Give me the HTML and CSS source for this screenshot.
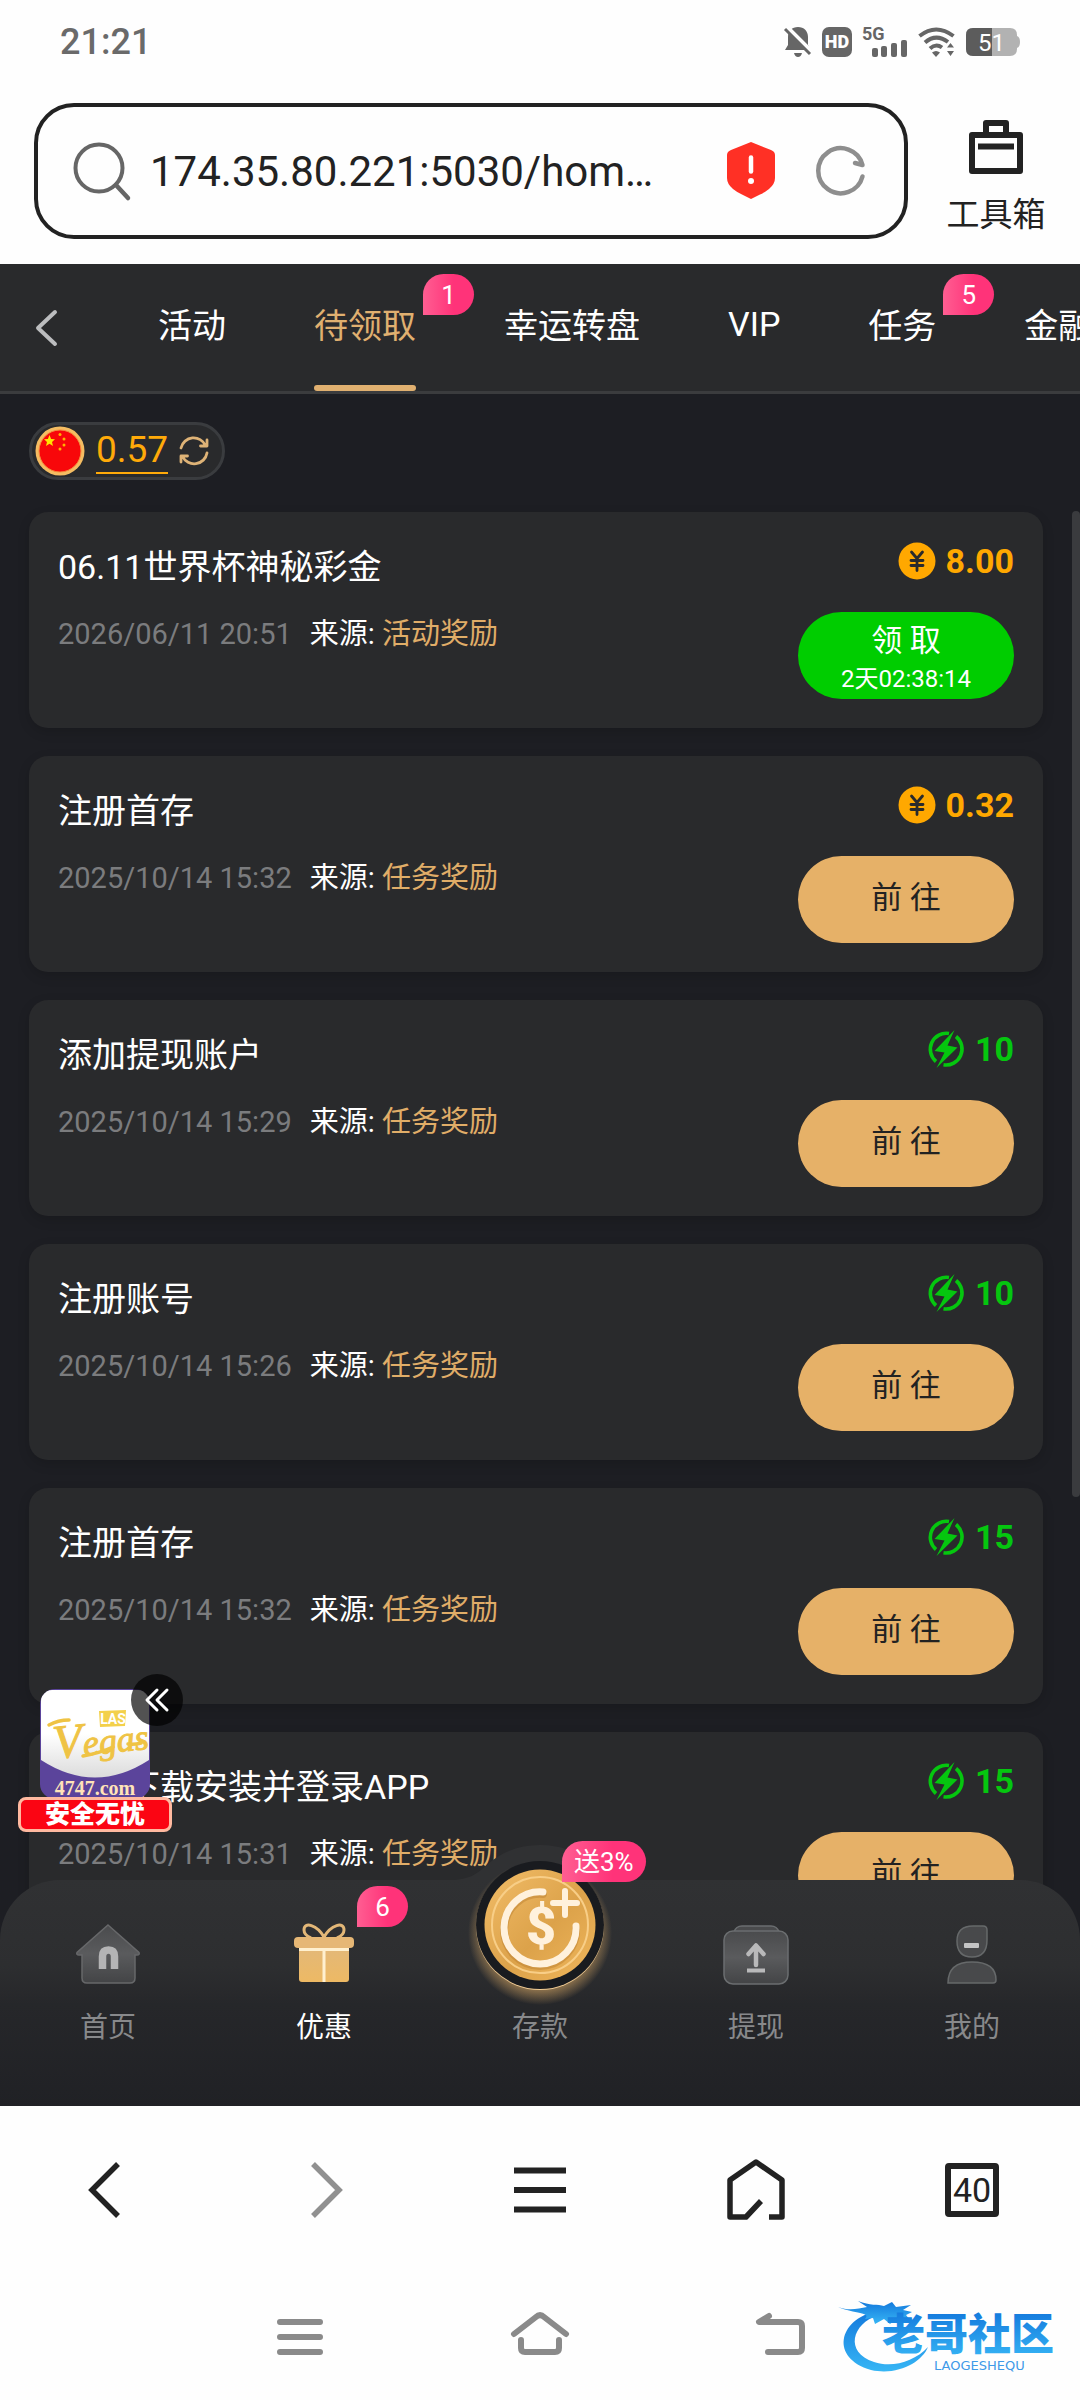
FILE: index.html
```html
<!DOCTYPE html>
<html lang="zh-CN">
<head>
<meta charset="utf-8">
<meta name="viewport" content="width=device-width, initial-scale=1">
<title>待领取</title>
<link rel="stylesheet" href="styles.css">
</head>
<body>
<svg class="defs" width="0" height="0" aria-hidden="true">
  <defs>
    <linearGradient id="grey" x1="0" y1="0" x2="0" y2="1">
      <stop offset="0" stop-color="#4a4b4d"/><stop offset=".5" stop-color="#5a5b5d"/><stop offset="1" stop-color="#434446"/>
    </linearGradient>
    <linearGradient id="gift" x1="0" y1="0" x2="0" y2="1">
      <stop offset="0" stop-color="#e3b878"/><stop offset="1" stop-color="#edb964"/>
    </linearGradient>
    <linearGradient id="coin" x1="0" y1="0" x2="1" y2="1">
      <stop offset="0" stop-color="#f2bd68"/><stop offset=".55" stop-color="#dca24a"/><stop offset="1" stop-color="#f0b75c"/>
    </linearGradient>
    <radialGradient id="glow">
      <stop offset=".76" stop-color="#e3b068" stop-opacity=".6"/><stop offset="1" stop-color="#e3b068" stop-opacity="0"/>
    </radialGradient>
    <linearGradient id="blue" x1="0" y1="0" x2="0" y2="1">
      <stop offset="0" stop-color="#1378dc"/><stop offset="1" stop-color="#37b6f5"/>
    </linearGradient>
    <linearGradient id="shade" x1="0" y1="0" x2="0" y2="1">
      <stop offset=".5" stop-color="#ffffff"/><stop offset="1" stop-color="#dcdcdc"/>
    </linearGradient>
    <symbol id="yuan" viewBox="0 0 38 38">
      <circle cx="19" cy="19" r="18.5" fill="#ffa800"/>
      <path d="M13.500 10 19 16.500 24.500 10M19 16.500V28.500M13 18.500H25M13 23.500H25" fill="none" stroke="#292a2c" stroke-width="2.800" stroke-linecap="round"/>
    </symbol>
    <symbol id="bolt" viewBox="0 0 38 38">
      <path d="M22 3.500A16 16 0 0 0 9 31.500M29 6.500A16 16 0 0 1 16.500 34.800" fill="none" stroke="#05c60f" stroke-width="3.600"/>
      <path d="M27.500 0 7.500 21 17.500 22.500 9.500 38 30.500 17.500 20.500 15.500Z" fill="#05c60f"/>
    </symbol>
  </defs>
</svg>

<div class="status">
  <time class="clock">21:21</time>
  <div class="status-icons">
    <svg width="28" height="32" viewBox="0 0 28 32"><path d="M14 1c6 0 10 4 10 10v8l3 5H1l3-5v-8C4 5 8 1 14 1Z" fill="#666"/><path d="M10 27h8q-1 4-4 4t-4-4Z" fill="#666"/><path d="M3 1 29 27" stroke="#fefefe" stroke-width="4"/><path d="M1 3 26 28" stroke="#666" stroke-width="3"/></svg>
    <svg width="30" height="30" viewBox="0 0 30 30"><rect width="30" height="30" rx="7" fill="#666"/><text x="15" y="21" class="t-hd">HD</text></svg>
    <svg width="46" height="40" viewBox="0 0 46 40"><text x="0" y="18" class="t-5g">5G</text><g fill="#666"><rect x="10" y="26" width="6" height="9" rx="2"/><rect x="19" y="24" width="6" height="11" rx="2"/><rect x="29" y="21" width="6" height="14" rx="2"/><rect x="39" y="18" width="6" height="17" rx="2"/></g></svg>
    <svg width="38" height="32" viewBox="0 0 38 32"><g fill="none" stroke="#666" stroke-width="4"><path d="M1.500 10Q18 -3 35.500 10"/><path d="M7 16.500Q18 7 30 16"/><path d="M12 22.500Q18 17 24 21.500"/></g><path d="M14 26.500Q18 23.500 22 26.500L18 31Z" fill="#666"/><path d="M29 21.500 32.500 17 36 21.500ZM29 25 32.500 30 36 25Z" fill="#666"/></svg>
    <svg width="54" height="28" viewBox="0 0 54 28"><path d="M7 0H44Q51 0 51 7V8Q54 9 54 14T51 20V21Q51 28 44 28H7Q0 28 0 21V7Q0 0 7 0Z" fill="#b2b2b2"/><path d="M26 0V28H7Q0 28 0 21V7Q0 0 7 0Z" fill="#5c5c5c"/><text x="25.500" y="23" class="t-bat">51</text></svg>
  </div>
</div>

<header class="address">
  <form class="url-box">
    <svg width="60" height="60" viewBox="0 0 60 60" fill="none" stroke="#666" stroke-width="4"><circle cx="27" cy="27" r="23.500"/><path d="M44 44 56 57" stroke-linecap="round" stroke-width="4.500"/></svg>
    <input class="url" type="text" aria-label="网址" value="174.35.80.221:5030/hom…" readonly>
    <button class="plain" type="button" aria-label="风险提示"><svg width="50" height="58" viewBox="0 0 50 58"><path d="M25 0 45 8Q49 9.500 49 13V36Q49 42 43 47Q38 51 34 52.500L25 57 16 52.500Q12 51 7 47Q1 42 1 36V13Q1 9.500 5 8Z" fill="#ff3025"/><path d="M25 15.500V29.500" stroke="#fff" stroke-width="4.500" stroke-linecap="round"/><circle cx="25" cy="39" r="3" fill="#fff"/></svg></button>
    <button class="plain reload" type="button" aria-label="刷新"><svg width="50" height="50" viewBox="0 0 50 50" fill="none" stroke="#8e8e8e" stroke-width="4.500" stroke-linecap="round" stroke-linejoin="round"><path d="M46.500 30.500A22.500 22.500 0 1 1 46.500 19L39 17"/></svg></button>
  </form>
  <button class="plain toolbox" type="button">
    <svg width="56" height="56" viewBox="0 0 56 56" fill="none" stroke="#222" stroke-width="6" stroke-linejoin="round"><rect x="4" y="16" width="48" height="36"/><path d="M18 15V4H38V15M10 27.500H46"/></svg>
    <span>工具箱</span>
  </button>
</header>

<section class="app">
  <nav class="tabs" aria-label="分类">
    <button class="plain back" type="button" aria-label="返回"><svg width="24" height="38" viewBox="0 0 24 38" fill="none" stroke="#bcbdbf" stroke-width="4" stroke-linecap="round" stroke-linejoin="round"><path d="M20 3 3 19 20 35"/></svg></button>
    <a class="tab" href="#">活动</a>
    <a class="tab active" href="#" aria-current="page">待领取<span class="badge tab-badge">1</span></a>
    <a class="tab" href="#">幸运转盘</a>
    <a class="tab" href="#">VIP</a>
    <a class="tab" href="#">任务<span class="badge tab-badge">5</span></a>
    <a class="tab" href="#">金融</a>
  </nav>

  <main class="content">
    <div class="balance">
      <svg width="50" height="50" viewBox="0 0 50 50"><circle cx="25" cy="25" r="24.500" fill="#f5bd62"/><circle cx="25" cy="25" r="21" fill="#f8070a" stroke="#f58a3c" stroke-width="1"/><path d="M14.500 9 16.100 13 20 13.200 17 16 18 20 14.500 17.700 11 20 12 16 9 13.200 12.900 13Z" fill="#ffe400"/><g fill="#ffb400"><circle cx="25" cy="8.500" r="1.500"/><circle cx="29" cy="13" r="1.500"/><circle cx="29" cy="19" r="1.500"/><circle cx="25" cy="23" r="1.500"/></g></svg>
      <a class="sum" href="#">0.57</a>
      <button class="plain" type="button" aria-label="刷新余额"><svg width="30" height="30" viewBox="0 0 30 30" fill="none" stroke="#deb377" stroke-width="2.800" stroke-linecap="round" stroke-linejoin="round"><path d="M2 12A13 13 0 0 1 26.500 9.500M28 4V10H21.500M28 17A13 13 0 0 1 3.500 20.500M2 26V20H8.500"/></svg></button>
    </div>

    <ul class="list">
      <li class="card">
        <div class="info"><h2>06.11世界杯神秘彩金</h2><p class="meta"><time>2026/06/11 20:51</time><span>来源: <em>活动奖励</em></span></p></div>
        <div class="side"><p class="amount cash"><svg width="38" height="38"><use href="#yuan"/></svg>8.00</p><button class="go claim" type="button">领 取<small>2天02:38:14</small></button></div>
      </li>
      <li class="card">
        <div class="info"><h2>注册首存</h2><p class="meta"><time>2025/10/14 15:32</time><span>来源: <em>任务奖励</em></span></p></div>
        <div class="side"><p class="amount cash"><svg width="38" height="38"><use href="#yuan"/></svg>0.32</p><button class="go" type="button">前 往</button></div>
      </li>
      <li class="card">
        <div class="info"><h2>添加提现账户</h2><p class="meta"><time>2025/10/14 15:29</time><span>来源: <em>任务奖励</em></span></p></div>
        <div class="side"><p class="amount"><svg width="38" height="38"><use href="#bolt"/></svg>10</p><button class="go" type="button">前 往</button></div>
      </li>
      <li class="card">
        <div class="info"><h2>注册账号</h2><p class="meta"><time>2025/10/14 15:26</time><span>来源: <em>任务奖励</em></span></p></div>
        <div class="side"><p class="amount"><svg width="38" height="38"><use href="#bolt"/></svg>10</p><button class="go" type="button">前 往</button></div>
      </li>
      <li class="card">
        <div class="info"><h2>注册首存</h2><p class="meta"><time>2025/10/14 15:32</time><span>来源: <em>任务奖励</em></span></p></div>
        <div class="side"><p class="amount"><svg width="38" height="38"><use href="#bolt"/></svg>15</p><button class="go" type="button">前 往</button></div>
      </li>
      <li class="card">
        <div class="info"><h2>首次下载安装并登录APP</h2><p class="meta"><time>2025/10/14 15:31</time><span>来源: <em>任务奖励</em></span></p></div>
        <div class="side"><p class="amount"><svg width="38" height="38"><use href="#bolt"/></svg>15</p><button class="go" type="button">前 往</button></div>
      </li>
    </ul>
    <div class="scrollbar"></div>
  </main>

  <aside class="promo">
    <svg class="promo-logo" width="110" height="110" viewBox="0 0 110 110">
      <clipPath id="tile"><rect width="110" height="110" rx="15"/></clipPath>
      <g clip-path="url(#tile)"><rect width="110" height="110" fill="#5b449b"/><path d="M1 12Q1 1 12 1H98Q109 1 109 12V71Q55 106 1 71Z" fill="url(#shade)"/></g>
      <path d="M59 22 86 21 85 37 60 38Z" fill="#f3d04a"/>
      <text x="73" y="35" class="t-las">LAS</text>
      <g transform="rotate(-6 50 60)"><text x="14" y="66" class="t-vegas"><tspan class="t-vegas-cap">V</tspan>egas</text></g>
      <path d="M9 36Q18 31 29 31M43 67Q60 64 73 58M88 55Q94 56 101 54" fill="none" stroke="#efc344" stroke-width="3.500" stroke-linecap="round"/>
      <text x="55" y="106" class="t-site">4747.com</text>
    </svg>
    <strong class="promo-tag">安全无忧</strong>
    <button class="plain promo-fold" type="button" aria-label="收起"><svg width="26" height="26" viewBox="0 0 26 26" fill="none" stroke="#fff" stroke-width="3" stroke-linecap="round" stroke-linejoin="round"><path d="M13 3 3 13 13 23M23 3 13 13 23 23"/></svg></button>
  </aside>

  <nav class="dock" aria-label="主导航">
    <svg class="hump" width="180" height="35" viewBox="0 0 180 35"><path d="M0 35C20 35 28 28 38 19C53 6 70 0 90 0C110 0 127 6 142 19C152 28 160 35 180 35Z" fill="#303133"/></svg>
    <a class="dock-item" href="#">
      <span class="dock-icon"><svg width="66" height="66" viewBox="0 0 66 66"><path d="M33 4 64 31.500Q65 34 62 34H60V57Q60 62 55 62H12Q7 62 7 57V34H4Q1 34 2 31.500Z" fill="url(#grey)" stroke="#67686a" stroke-width="1.500"/><path d="M27.500 48V35.500Q27.500 29 33.500 29T39.500 35.500V48" fill="none" stroke="#b4b4b5" stroke-width="7.500"/></svg></span>
      <span>首页</span>
    </a>
    <a class="dock-item active" href="#" aria-current="page">
      <span class="dock-icon"><svg width="66" height="66" viewBox="0 0 66 66"><path d="M33 16C26 4 13 0 13 9Q13 14 20 17M33 16C40 4 53 0 53 9Q53 14 46 17" fill="none" stroke="#e3b777" stroke-width="3"/><path d="M8 27H58V58Q58 61 55 61H11Q8 61 8 58Z" fill="url(#gift)"/><path d="M8 28.500H58M33 28V61" stroke="#fff0cf" stroke-width="3"/><rect x="3" y="16" width="60" height="11" rx="4" fill="#e6b775"/></svg><span class="badge dock-badge">6</span></span>
      <span>优惠</span>
    </a>
    <a class="dock-item deposit" href="#">
      <span class="dock-icon"><svg class="coin" width="160" height="160" viewBox="0 0 160 160">
        <circle cx="80" cy="88" r="72" fill="url(#glow)"/>
        <path d="M0 0H160V84H144A64 64 0 0 0 16 84H0Z" fill="none"/>
        <circle cx="80" cy="81" r="64" fill="#f0cb94"/>
        <circle cx="80" cy="80" r="64" fill="#191b1f"/>
        <circle cx="80" cy="80" r="55.500" fill="url(#coin)"/>
        <circle cx="80" cy="80" r="48" fill="none" stroke="#f8ce87" stroke-width="2"/>
        <path d="M83 49A36 36 0 1 0 116 83" fill="none" stroke="#b3782a" stroke-opacity=".4" stroke-width="8" stroke-linecap="round"/>
        <path d="M83 47A36 36 0 1 0 116 81" fill="none" stroke="#fff1dc" stroke-width="7" stroke-linecap="round"/>
        <path d="M105 46V70M93 58H117" stroke="#fff1dc" stroke-width="6" stroke-linecap="round"/>
        <text x="81" y="99" class="t-coin">$</text></svg><span class="badge offer-badge">送3%</span></span>
      <span>存款</span>
    </a>
    <a class="dock-item" href="#">
      <span class="dock-icon"><svg width="66" height="66" viewBox="0 0 66 66" stroke="#6b6e70" stroke-width="1.500"><path d="M11 11Q13 5 19 5H48Q54 5 56 11Z" fill="#4a4b4d"/><rect x="1" y="10" width="64" height="53" rx="9" fill="url(#grey)"/><path d="M33 44V26M25.500 33 33 24.500 40.500 33" fill="none" stroke="#b9b9ba" stroke-width="4.500" stroke-linecap="round" stroke-linejoin="round"/><path d="M24 49.500H42" stroke="#b9b9ba" stroke-width="4"/></svg></span>
      <span>提现</span>
    </a>
    <a class="dock-item" href="#">
      <span class="dock-icon"><svg width="66" height="66" viewBox="0 0 66 66" fill="#48494b" stroke="#66696a" stroke-width="1.500"><path d="M34 5H44Q48 5 48 9V19Q48 36 33 36Q18 36 18 20Q18 5 34 5Z"/><path d="M9 62Q9 41 33 41T57 59Q57 62 54 62Z"/><rect x="25" y="22" width="15" height="5" rx="1" fill="#c4c4c5" stroke="none"/></svg></span>
      <span>我的</span>
    </a>
  </nav>
</section>

<nav class="browser-bar" aria-label="浏览器">
  <button class="plain" type="button" aria-label="后退"><svg width="60" height="60" viewBox="0 0 60 60" fill="none" stroke="#222" stroke-width="5.500"><path d="M40 4 14 30 40 56" /></svg></button>
  <button class="plain" type="button" aria-label="前进"><svg width="60" height="60" viewBox="0 0 60 60" fill="none" stroke="#909090" stroke-width="5.500"><path d="M19 4 45 30 19 56"/></svg></button>
  <button class="plain" type="button" aria-label="菜单"><svg width="60" height="60" viewBox="0 0 60 60" stroke="#222" stroke-width="6"><path d="M4 10.500H56M4 30H56M4 49.500H56"/></svg></button>
  <button class="plain" type="button" aria-label="主页"><svg width="60" height="64" viewBox="0 0 60 64" fill="none" stroke="#222" stroke-width="5.500" stroke-linejoin="round"><path d="M35 43 20 59H4V22L30 4 56 22V59H43"/></svg></button>
  <button class="plain" type="button" aria-label="标签页"><span class="tab-count">40</span></button>
</nav>

<nav class="system-bar" aria-label="系统">
  <button class="plain" type="button" aria-label="最近任务"><svg width="60" height="48" viewBox="0 0 60 48" stroke="#8a8a8a" stroke-width="6" stroke-linecap="round"><path d="M10 9H50M10 24H50M10 39H50"/></svg></button>
  <button class="plain" type="button" aria-label="桌面"><svg width="60" height="48" viewBox="0 0 60 48" fill="none" stroke="#8a8a8a" stroke-width="6" stroke-linecap="round" stroke-linejoin="round"><path d="M4 21 26 4Q30 0 34 4L56 21M11 27V35Q11 39 15 39H45Q49 39 49 35V27"/></svg></button>
  <button class="plain" type="button" aria-label="返回上级"><svg width="60" height="48" viewBox="0 0 60 48" fill="none" stroke="#8a8a8a" stroke-width="6" stroke-linecap="round" stroke-linejoin="round"><path d="M19 3 9 9H48Q52 9 52 13V35Q52 39 48 39H18"/></svg></button>
  <div class="watermark">
    <svg width="232" height="80" viewBox="0 0 232 80">
      <path d="M36 15C-2 24 -10 62 31 74C58 80 82 66 88 51C74 66 52 72 34 66C4 56 12 28 38 19Z" fill="url(#blue)"/>
      <path d="M-2 11C8 15 18 13 27 11L18 5C30 10 38 8 44 10L52 6 56 11 71 9 63 14 72 16 66 19 70 24 58 22 50 28 44 23 35 28 33 22 25 23C32 16 14 18 -2 11Z" fill="url(#blue)"/>
      <text x="42" y="54" class="t-mark">老哥社区</text>
      <text x="94" y="74" class="t-mark-sub">LAOGESHEQU</text>
    </svg>
  </div>
</nav>
</body>
</html>
```
FILE: styles.css
```css
* {
  box-sizing: border-box;
}

body {
  margin: 0;
  height: 100vh;
  display: flex;
  flex-direction: column;
  background: #fefefe;
  color: #222;
  font-family: Roboto, "Noto Sans CJK SC", sans-serif;
}

h2,
p,
ul {
  margin: 0;
  padding: 0;
  font-weight: 400;
}

ul {
  list-style: none;
}

em {
  font-style: normal;
}

a {
  color: inherit;
  text-decoration: none;
}

svg {
  display: block;
  flex: none;
  overflow: visible;
}

.defs {
  position: absolute;
}

.plain {
  padding: 0;
  border: 0;
  background: none;
  color: inherit;
  font: inherit;
}

/* Phone status bar */

.status {
  display: flex;
  justify-content: space-between;
  align-items: center;
  height: 84px;
  padding: 0 60px;
  flex: none;
}

.clock {
  font-size: 36px;
  font-weight: 500;
  color: #6a6a6a;
}

.status-icons {
  display: flex;
  align-items: center;
  gap: 10px;
}

.t-hd,
.t-5g,
.t-bat,
.t-las,
.t-site,
.t-coin {
  text-anchor: middle;
}

.t-hd {
  font-size: 18px;
  font-weight: 900;
  fill: #fff;
}

.t-5g {
  font-size: 18px;
  font-weight: 700;
  fill: #666;
  text-anchor: start;
}

.t-bat {
  font-size: 24px;
  fill: #fff;
}

/* Address bar */

.address {
  display: flex;
  align-items: flex-start;
  gap: 36px;
  padding: 19px 32px 25px 34px;
  flex: none;
}

.url-box {
  display: flex;
  align-items: center;
  flex: 1;
  min-width: 0;
  height: 136px;
  padding: 0 38px 0 34px;
  border: 4px solid #222;
  border-radius: 40px;
}

.url {
  flex: 1;
  min-width: 0;
  height: 60px;
  margin-left: 18px;
  padding: 0;
  border: 0;
  outline: 0;
  background: none;
  color: #222;
  font: inherit;
  font-size: 42px;
}

.reload {
  margin-left: 40px;
}

.toolbox {
  display: flex;
  flex-direction: column;
  align-items: center;
  gap: 20px;
  width: 104px;
  padding-top: 16px;
  font-size: 33px;
  line-height: 40px;
  white-space: nowrap;
}

/* Web app */

.app {
  position: relative;
  display: flex;
  flex-direction: column;
  flex: 1;
  min-height: 0;
  overflow: hidden;
  background: #1d1e23;
  color: #fff;
}

.tabs {
  display: flex;
  align-items: stretch;
  gap: 88px;
  height: 130px;
  flex: none;
  overflow: hidden;
  border-bottom: 3px solid #3b3c3e;
  background: #292a2c;
  font-size: 34px;
}

.back {
  flex: none;
  width: 70px;
  padding-left: 35px;
}

.tab {
  position: relative;
  display: flex;
  align-items: center;
  flex: none;
  padding-bottom: 8px;
}

.tab.active {
  color: #e0b070;
}

.tab.active::after {
  content: "";
  position: absolute;
  left: 0;
  right: 0;
  bottom: 0;
  height: 6px;
  border-radius: 3px;
  background: #e0b070;
}

.badge {
  position: absolute;
  display: flex;
  align-items: center;
  justify-content: center;
  min-width: 51px;
  height: 41px;
  padding: 0 12px;
  border-radius: 21px 21px 21px 0;
  background: linear-gradient(90deg, #ff5e92, #ff3379 60%);
  color: #fff;
  font-size: 26px;
  white-space: nowrap;
}

.tab-badge {
  left: 100%;
  top: 10px;
  margin-left: 7px;
}

.content {
  position: relative;
  flex: 1;
  min-height: 0;
  padding: 28px 37px 0 29px;
  overflow: hidden;
}

.balance {
  display: flex;
  align-items: center;
  gap: 11px;
  width: max-content;
  height: 58px;
  margin-bottom: 32px;
  padding: 0 13px 0 3px;
  border: 3px solid #3a3c3f;
  border-radius: 29px;
  background: #292a2c;
}

.sum {
  border-bottom: 2px solid #ffaa09;
  color: #ffaa09;
  font-size: 37px;
  line-height: 44px;
}

.list {
  display: flex;
  flex-direction: column;
  gap: 28px;
}

.card {
  display: flex;
  justify-content: space-between;
  min-height: 216px;
  padding: 28px 29px 29px;
  border-radius: 19px;
  background: #292a2c;
  box-shadow: 0 4px 12px rgba(0, 0, 0, 0.15);
}

.info h2 {
  font-size: 34px;
  line-height: 54px;
}

.meta {
  display: flex;
  gap: 18px;
  margin-top: 20px;
  font-size: 29px;
  line-height: 40px;
}

.meta time {
  color: #7b7c7e;
}

.meta em {
  color: #e0ad68;
}

.side {
  display: flex;
  flex-direction: column;
  align-items: flex-end;
  justify-content: space-between;
}

.amount {
  display: flex;
  align-items: center;
  gap: 10px;
  color: #05c60f;
  font-size: 34px;
  font-weight: 700;
  line-height: 42px;
}

.amount.cash {
  color: #ffa800;
}

.go {
  display: flex;
  flex-direction: column;
  align-items: center;
  justify-content: center;
  width: 216px;
  height: 87px;
  padding: 0 0 4px;
  border: 0;
  border-radius: 44px;
  background: #e6b168;
  color: #222;
  font: inherit;
  font-size: 31px;
  line-height: 40px;
}

.claim {
  padding: 6px 0 0;
  background: #00cd00;
  color: #fff;
}

.claim small {
  font-size: 24px;
  line-height: 36px;
}

.scrollbar {
  position: absolute;
  top: 117px;
  right: 0;
  width: 8px;
  height: 986px;
  border-radius: 4px;
  background: #3a3b3e;
}

/* Floating promotion */

.promo {
  position: absolute;
  left: 18px;
  bottom: 274px;
  display: flex;
  flex-direction: column;
  align-items: center;
  width: 154px;
}

.promo-logo {
  margin-bottom: -2px;
}

.promo-tag {
  width: 100%;
  border: 3px solid #ffb9a0;
  border-radius: 8px;
  background: #fb0513;
  font-size: 25px;
  font-weight: 900;
  line-height: 29px;
  text-align: center;
}

.promo-fold {
  position: absolute;
  top: -15px;
  right: -11px;
  display: flex;
  align-items: center;
  justify-content: center;
  width: 52px;
  height: 52px;
  border-radius: 50%;
  background: rgba(0, 0, 0, 0.68);
}

.t-las {
  font-size: 14px;
  font-weight: 700;
  fill: #fff;
}

.t-vegas {
  font-family: "Liberation Serif", serif;
  font-size: 36px;
  font-style: italic;
  fill: #efc344;
  stroke: #efc344;
}

.t-vegas-cap {
  font-size: 48px;
}

.t-site {
  font-family: "Liberation Serif", serif;
  font-size: 20px;
  font-weight: 700;
  fill: #ffe3b8;
}

/* App dock */

.dock {
  position: absolute;
  left: 0;
  right: 0;
  bottom: 0;
  display: flex;
  padding: 41px 0 58px;
  border-radius: 60px 60px 0 0;
  background: linear-gradient(#303133, #2d2e30 38%, #26272a 55%, #202125);
  color: #88898b;
}

.hump {
  position: absolute;
  left: 50%;
  bottom: 100%;
  margin-left: -90px;
}

.dock-item {
  display: flex;
  flex: 1;
  flex-direction: column;
  align-items: center;
  gap: 21px;
  font-size: 28px;
  line-height: 40px;
}

.dock-item.active {
  color: #fff;
}

.dock-icon {
  position: relative;
  width: 66px;
  height: 66px;
}

.coin {
  position: absolute;
  left: -47px;
  top: -76px;
}

.t-coin {
  font-size: 52px;
  font-weight: 900;
  fill: #fff1dc;
}

.dock-badge {
  left: 100%;
  bottom: 60px;
}

.offer-badge {
  left: 55px;
  bottom: 105px;
}

/* Browser and system bars */

.browser-bar {
  display: flex;
  height: 168px;
  flex: none;
}

.browser-bar .plain {
  display: flex;
  flex: 1;
  align-items: center;
  justify-content: center;
}

.tab-count {
  width: 54px;
  height: 54px;
  border: 6px solid #222;
  border-radius: 4px;
  font-size: 34px;
  line-height: 42px;
}

.system-bar {
  position: relative;
  display: flex;
  align-items: center;
  justify-content: center;
  gap: 180px;
  height: 126px;
  flex: none;
}

.watermark {
  position: absolute;
  right: 8px;
  bottom: 24px;
}

.t-mark {
  font-size: 43px;
  font-weight: 900;
  fill: url(#blue);
}

.t-mark-sub {
  font-family: "DejaVu Sans", sans-serif;
  font-size: 13px;
  fill: #3f9ae8;
}
```
